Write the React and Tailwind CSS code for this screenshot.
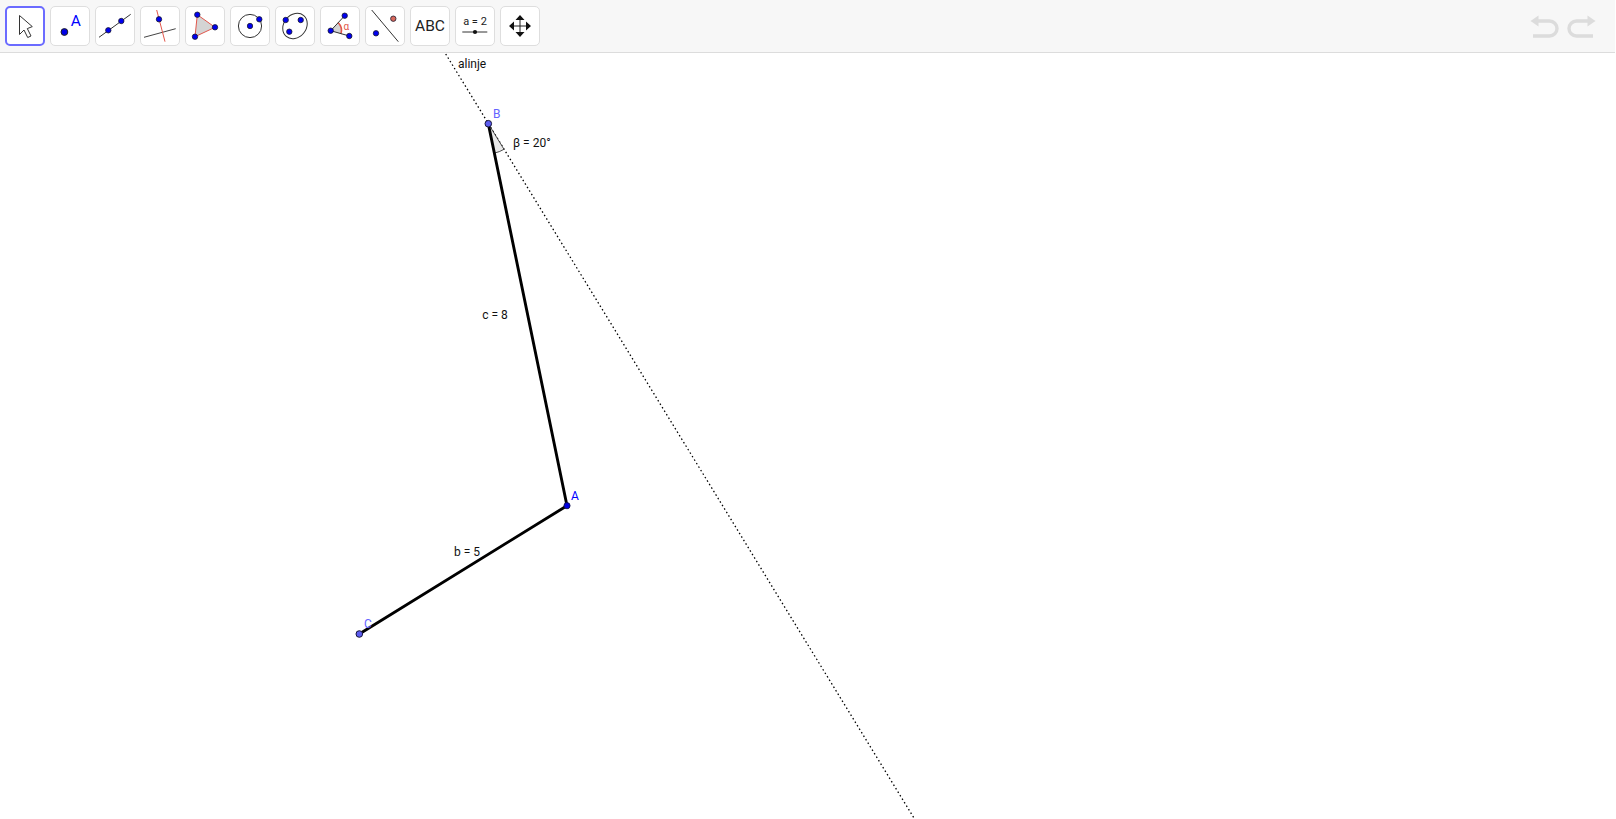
const FONT = "Roboto, 'Liberation Sans', sans-serif";

const Pt = ({ x, y, r = 2.7, fill = "#0000f0" }) => (
  <circle cx={x} cy={y} r={r} fill={fill} stroke="#1a1a2e" strokeWidth="0.8" />
);

const Svg = ({ children }) => (
  <svg viewBox="0 0 40 40" className="w-10 h-10 block">{children}</svg>
);

const icons = [
  <Svg key="move">
    <path d="M14.5 9.5V28.5L19 24L22.7 31.5L26 30L22.3 22.6L27.3 20.6Z" fill="#fff" stroke="#333" strokeWidth="1" strokeLinejoin="miter" />
  </Svg>,
  <Svg key="point">
    <circle cx="14.4" cy="26" r="3.4" fill="#0000e6" stroke="#222" strokeWidth="1" />
    <text x="25.8" y="19.5" textAnchor="middle" fontSize="15.5" fill="#0000ff" fontFamily={FONT}>A</text>
  </Svg>,
  <Svg key="line">
    <path d="M4 31.3L35.7 8.3" stroke="#333" strokeWidth="1" />
    <Pt x={13.3} y={24.3} />
    <Pt x={26.3} y={15} />
  </Svg>,
  <Svg key="perp">
    <path d="M4 31.3L35.7 22.7" stroke="#444" strokeWidth="1" />
    <path d="M16.7 4L25 35.7" stroke="#e2574c" strokeWidth="1" />
    <Pt x={19} y={13.3} />
  </Svg>,
  <Svg key="poly">
    <path d="M12.3 8.7L30 21.3L10 30.7Z" fill="#d4d4d4" stroke="#e2574c" strokeWidth="1" />
    <Pt x={12.3} y={8.7} />
    <Pt x={30} y={21.3} />
    <Pt x={10} y={30.7} />
  </Svg>,
  <Svg key="circle">
    <circle cx="20" cy="20" r="11.6" fill="none" stroke="#333" strokeWidth="1" />
    <Pt x={20} y={20} />
    <Pt x={29.3} y={13.3} />
  </Svg>,
  <Svg key="conic">
    <ellipse cx="20" cy="20" rx="13.6" ry="11.2" transform="rotate(-50 20 20)" fill="none" stroke="#333" strokeWidth="1" />
    <Pt x={10.7} y={14} />
    <Pt x={25.7} y={14} />
    <Pt x={14.3} y={25.7} />
  </Svg>,
  <Svg key="angle">
    <path d="M10.7 24.7L18 16.5A11 11 0 0 1 20.8 28Z" fill="#d4d4d4" />
    <path d="M18 16.5A11 11 0 0 1 20.8 28" fill="none" stroke="#e2574c" strokeWidth="1.6" />
    <path d="M24.7 9.7L10.7 24.7L29.3 30" fill="none" stroke="#333" strokeWidth="1" />
    <Pt x={10.7} y={24.7} />
    <Pt x={24.7} y={9.7} />
    <Pt x={29.3} y={30} />
    <text x="26.3" y="23.5" textAnchor="middle" fontSize="10" fill="#e2574c" fontFamily={FONT}>α</text>
  </Svg>,
  <Svg key="reflect">
    <path d="M6.7 4L33.3 35.7" stroke="#333" strokeWidth="1" />
    <Pt x={11} y={27.3} />
    <Pt x={28.3} y={12.7} fill="#d9695c" />
  </Svg>,
  <div key="abc" className="w-10 h-10 flex items-center justify-center pt-[2px] text-[15.5px] text-[#222]" style={{ fontFamily: FONT }}>ABC</div>,
  <Svg key="slider">
    <text x="20" y="18.5" textAnchor="middle" fontSize="11" fill="#222" fontFamily={FONT}>a = 2</text>
    <path d="M7.3 26H32.3" stroke="#333" strokeWidth="1" />
    <circle cx="20" cy="26" r="2.1" fill="#111" />
  </Svg>,
  <Svg key="pan">
    <path d="M20 12V28M12 20H28" stroke="#222" strokeWidth="1" />
    <path d="M20 9L15.5 14H24.5ZM20 31L15.5 26H24.5ZM9 20L14 15.5V24.5ZM31 20L26 15.5V24.5Z" fill="#111" />
  </Svg>,
];

export default function App() {
  const ax = 567, ay = 505.7, bx = 488.3, by = 123.7, cx = 359.3, cy = 634;
  return (
    <div className="h-[819px] overflow-hidden bg-white" style={{ fontFamily: FONT }}>
      <div className="flex h-[53px] w-[1615px] items-start gap-[5px] border-b border-[#dcdcdc] bg-[#f7f7f7] pl-[5px] pt-[6px]">
        {icons.map((icon, i) => (
          <div
            key={i}
            className={
              i === 0
                ? "h-10 w-10 rounded-[5px] border-2 border-[#6b6bff] bg-white flex items-center justify-center overflow-hidden"
                : "h-10 w-10 rounded-[5px] border border-[#dedede] bg-white flex items-center justify-center overflow-hidden"
            }
          >
            <div className="h-10 w-10 shrink-0">{icon}</div>
          </div>
        ))}
        <div className="ml-auto mr-[19px] mt-[7px] flex gap-[6px]">
          <svg width="30" height="26" viewBox="0 0 30 26">
            <path d="M5 8H19.5A7.3 7.3 0 0 1 19.5 23H3" fill="none" stroke="#dcdcdc" strokeWidth="3.4" />
            <path d="M0.5 8L8.5 2.5V13.5Z" fill="#dcdcdc" />
          </svg>
          <svg width="30" height="26" viewBox="0 0 30 26">
            <path d="M25 8H10.5A7.3 7.3 0 0 0 10.5 23H27" fill="none" stroke="#dcdcdc" strokeWidth="3.4" />
            <path d="M29.5 8L21.5 2.5V13.5Z" fill="#dcdcdc" />
          </svg>
        </div>
      </div>
      <svg width="1616" height="766" viewBox="0 53 1616 766" className="block">
        <path d="M445.7 54L914 818" stroke="#000" strokeWidth="1.3" strokeDasharray="1.5 2.6" fill="none" />
        <path d={`M${bx} ${by}L504 149.3A30 30 0 0 1 494.4 153.1Z`} fill="#e8e8e8" stroke="#222" strokeWidth="0.8" />
        <path d={`M${bx} ${by}L${ax} ${ay}L${cx} ${cy}`} fill="none" stroke="#000" strokeWidth="2.9" strokeLinejoin="round" />
        <circle cx={ax} cy={ay} r="3.1" fill="#0000e0" stroke="#101040" strokeWidth="0.8" />
        <circle cx={bx} cy={by} r="3.3" fill="#5c5cf0" stroke="#16163a" strokeWidth="1" />
        <circle cx={cx} cy={cy} r="3.3" fill="#5c5cf0" stroke="#16163a" strokeWidth="1" />
        <g fontFamily={FONT} fontSize="12">
          <text x="458" y="68" fill="#111">alinje</text>
          <text x="493" y="118" fill="#6464ff">B</text>
          <text x="513" y="147" fill="#111">β = 20°</text>
          <text x="482.3" y="319" fill="#111">c = 8</text>
          <text x="571" y="500" fill="#0000ff">A</text>
          <text x="454" y="556" fill="#111">b = 5</text>
          <text x="364" y="628" fill="#6464ff">C</text>
        </g>
      </svg>
    </div>
  );
}
